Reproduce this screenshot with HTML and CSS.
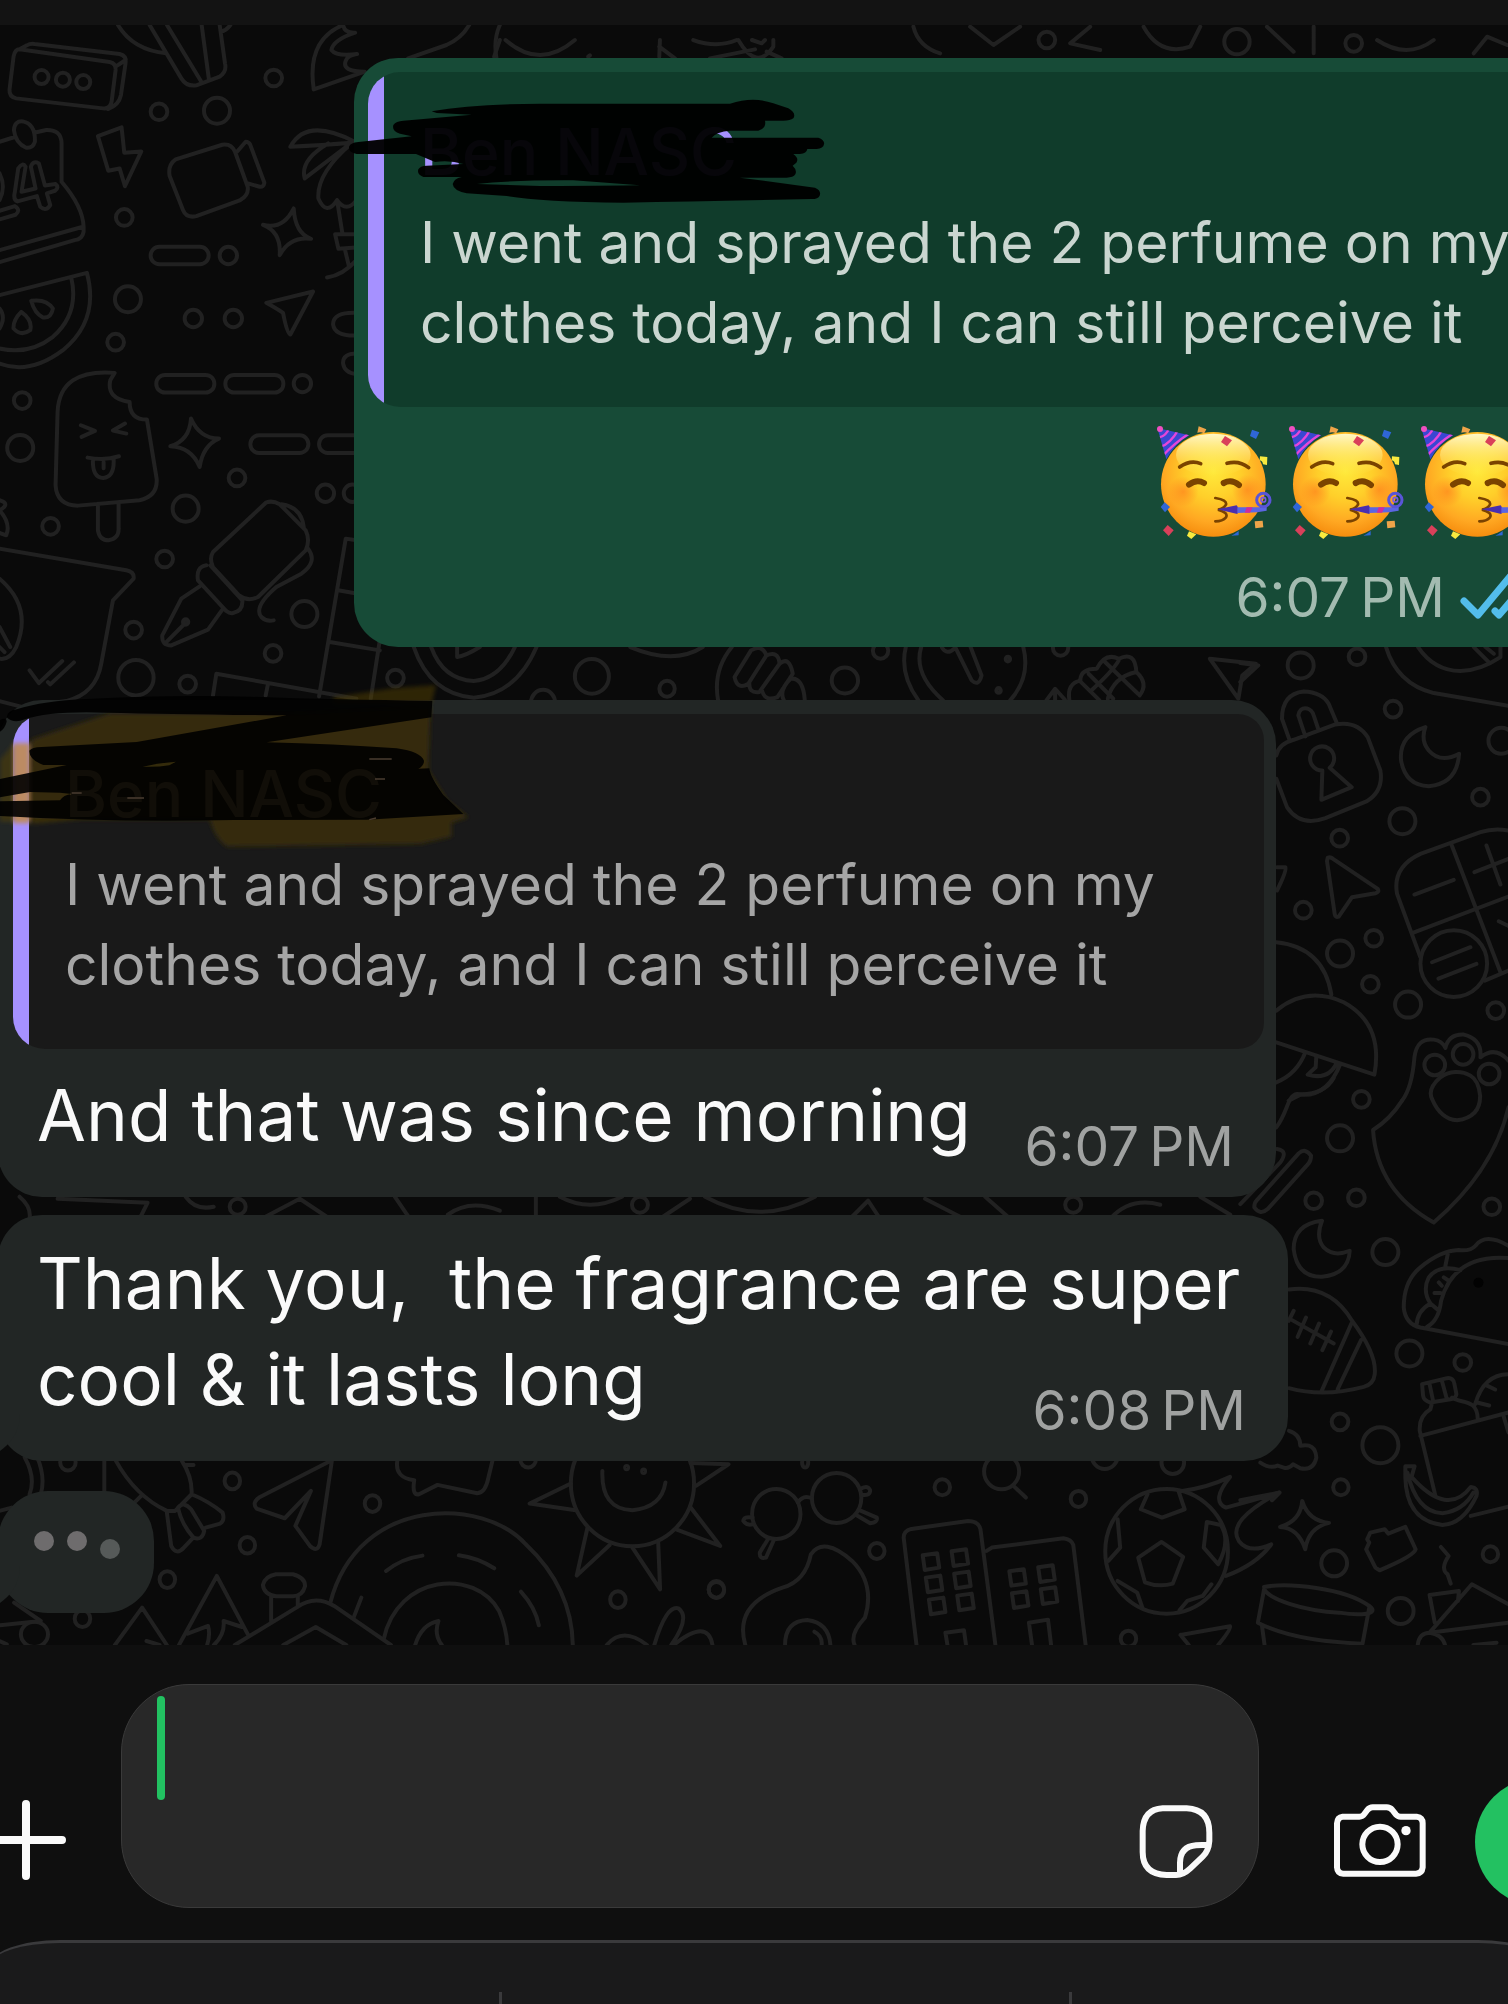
FILE: index.html
```html
<!DOCTYPE html>
<html lang="en">
<head>
<meta charset="utf-8">
<meta name="viewport" content="width=device-width, initial-scale=1">
<title>Chat</title>
<link rel="stylesheet" href="styles.css">
</head>
<body>
<header class="topbar"></header>
<main class="chat">
  <svg class="wallpaper" viewBox="0 25 1508 1619" preserveAspectRatio="xMidYMin slice" aria-hidden="true">
    <!-- top left -->
    <g transform="scale(.33333)">
      <path d="M60 148L330 186Q350 190 348 210L336 305Q332 328 310 325L50 295Q28 290 30 268L42 170Q46 148 60 148ZM60 148L82 136Q92 130 105 132L360 162Q382 168 378 188L364 285Q358 315 325 327M348 200L378 180"/>
      <circle cx="126" cy="231" r="21"/><circle cx="190" cy="239" r="21"/><circle cx="251" cy="246" r="21"/>
      <path d="M355 75Q400 150 500 160M450 75L545 235Q560 260 590 256L660 230Q682 215 676 190L660 75M502 75L605 245M606 75L628 240M664 95Q680 92 692 75"/>
      <circle cx="478" cy="335" r="25"/><circle cx="652" cy="332" r="39"/><circle cx="822" cy="234" r="25"/><circle cx="374" cy="652" r="25"/><circle cx="385" cy="897" r="39"/><circle cx="686" cy="766" r="26"/><circle cx="581" cy="955" r="26"/><circle cx="701" cy="955" r="26"/><circle cx="348" cy="1026" r="25"/><circle cx="68" cy="1201" r="25"/>
      <path d="M1030 75Q920 120 942 268L1095 215Q1025 215 1038 182Q1045 165 1072 162Q1010 170 995 150Q1000 120 1066 98Q1035 100 1030 75M1225 175L1340 135Q1385 115 1408 75M1500 75Q1480 120 1490 175"/>
      <path d="M0 425L48 410M104 398L140 390Q185 388 186 430V545Q250 620 252 680V695Q248 718 225 720L0 786M0 750L250 680M43 390Q45 362 70 364Q108 372 106 425Q100 445 80 443Q48 430 43 390ZM0 520Q20 560 0 600M56 505Q70 485 78 500L66 575L108 565L94 500Q100 480 118 490L136 556L168 552Q180 562 166 572L142 580L152 615Q140 635 122 620L112 588L54 604Q40 600 46 575ZM0 632L46 618Q65 630 48 644L0 658"/>
      <path d="M295 408L366 382L374 458L425 454L376 558L360 505L326 512ZM528 478L668 434Q695 430 706 455L744 560Q748 585 722 600L590 648Q560 655 550 630L510 528Q504 495 528 478ZM712 455L738 425Q748 425 752 435L794 548Q792 562 780 560L745 550"/>
      <path d="M882 625Q886 700 934 716Q870 708 840 765Q845 695 790 674Q850 690 882 625ZM800 908L940 874L872 1003Q862 1000 850 938Q830 925 800 908Z"/>
      <rect x="453" y="740" width="174" height="52" rx="26"/>
      <path d="M872 440Q920 350 1065 425M872 440Q970 435 1055 428L915 535Q900 480 985 430M1055 430Q950 520 956 595Q980 650 1012 600Q1040 640 1070 600M1012 600L1028 700M1068 702H1006L1016 746L1068 742M1036 750L1048 800M1070 780Q1030 825 982 832M1070 938Q1000 935 1000 972Q1004 1008 1070 1006M1070 1060Q1028 1060 1030 1090Q1034 1118 1070 1122"/>
      <path d="M0 885L262 818Q300 960 190 1050Q90 1125 0 1090M215 832Q240 940 160 1010Q90 1065 0 1045M95 902Q140 895 160 925Q155 955 130 952Q105 940 95 902ZM65 935Q100 960 92 990Q65 1010 42 985Q40 960 65 935ZM0 925Q20 950 0 985"/>
    </g>
    <!-- left column below the watermelon -->
    <g transform="translate(0 340) scale(.33333)">
      <circle cx="62" cy="323" r="39"/><circle cx="153" cy="558" r="25"/><circle cx="495" cy="656" r="25"/><circle cx="558" cy="505" r="39"/><circle cx="712" cy="413" r="25"/><circle cx="908" cy="130" r="26"/><circle cx="977" cy="459" r="26"/><circle cx="1058" cy="459" r="26"/><circle cx="402" cy="869" r="25"/><circle cx="914" cy="821" r="39"/><circle cx="820" cy="939" r="25"/><circle cx="409" cy="1012" r="53"/><circle cx="564" cy="1031" r="25"/><circle cx="1187" cy="1013" r="25"/>
      <rect x="470" y="104" width="174" height="53" rx="26"/><rect x="677" y="104" width="174" height="53" rx="26"/><rect x="752" y="285" width="174" height="53" rx="26"/><rect x="958" y="285" width="174" height="53" rx="26"/>
      <path d="M345 98Q180 85 174 215L168 435Q172 495 235 496L420 480Q475 468 471 415L442 238Q390 238 390 185Q320 175 332 120ZM295 490V570Q300 600 327 600Q358 595 357 565V490M244 255L286 272L246 290M376 250L340 271L380 280M264 352Q315 362 358 348M280 358Q278 412 311 413Q345 410 342 356M312 365V384"/>
      <path d="M574 235Q600 295 658 295Q610 315 600 380Q575 320 512 318Q570 300 574 235ZM0 480Q35 490 0 510M0 510Q35 550 20 585L0 578"/>
      <path d="M800 486Q820 480 840 492L918 570Q932 600 918 630L775 770Q745 785 718 765L640 680Q628 655 640 635ZM632 675L728 780Q730 812 700 818Q690 820 680 812L595 720Q588 680 620 675M845 492Q905 500 912 560M925 625Q955 665 905 700L830 740Q760 800 785 830Q800 845 822 840M600 738L545 775L488 885Q485 915 515 915L625 868L668 808M500 905L560 845"/><circle cx="558" cy="845" r="8"/>
      <path d="M0 625L380 690Q405 695 402 715L340 780L305 970Q290 1060 200 1082L70 1100L0 1082M0 715Q100 800 50 920Q30 960 0 955M0 860L32 920M0 920L15 935M90 990L118 1028L188 962M145 1025L152 1032L223 966"/>
      <path d="M1070 600L1038 595L958 1068M1015 750L1062 758M990 905L1140 930M1140 900L1113 1075M640 1065L650 1000L1070 1075M804 1035L798 1065"/>
      <path d="M1242 920Q1290 1060 1422 1072Q1550 1060 1610 920M1294 920Q1330 1018 1422 1022Q1500 1015 1545 920M1372 920V950Q1400 945 1440 920"/>
    </g>
    <!-- strip above the first message -->
    <g transform="translate(340 40) scale(.33333)">
      <path d="M480 0L463 50M497 0Q600 90 705 0M745 50L750 46M960 0L958 50M958 20L1005 55M1060 0Q1130 25 1190 0M1110 55L1245 28M1195 0Q1250 95 1300 20V0M1280 35L1325 55M1236 0L1265 10L1275 0"/>
      <path d="M1720 -40Q1735 20 1800 40M1890 -40L1960 15L2040 -40M2250 -40L2190 10L2280 30M2410 -40Q2460 50 2550 20L2580 -40M2780 -40L2860 35M2920 -40V40M3110 0Q3200 60 3280 0M3400 40L3440 -10L3500 15"/><circle cx="2120" cy="0" r="25"/><circle cx="2690" cy="5" r="38"/><circle cx="3040" cy="10" r="25"/>
    </g>
    <!-- strip between the first two messages -->
    <g transform="translate(400 640) scale(.5485 .33333)">
      <ellipse cx="350" cy="108" rx="31" ry="52"/><ellipse cx="487" cy="145" rx="14" ry="24"/><ellipse cx="811" cy="120" rx="24" ry="39"/><ellipse cx="876" cy="31" rx="14" ry="24"/><ellipse cx="1204" cy="22" rx="14" ry="24"/><ellipse cx="261" cy="187" rx="22" ry="39"/><ellipse cx="1108" cy="56" rx="4" ry="7"/><ellipse cx="1091" cy="150" rx="4" ry="7"/>
      <path d="M420 20Q500 75 552 20M605 20Q570 90 580 180M640 30Q660 10 668 45L635 130Q615 150 610 110ZM668 45Q690 30 692 70L655 155Q635 160 637 125M692 70Q710 45 716 100L688 170Q665 185 660 150M738 180Q735 110 712 115Q690 150 700 180M922 20Q910 100 945 180M950 20Q935 100 990 180M1136 20Q1150 110 1112 180M1012 20L1042 120Q1055 140 1060 105L1040 20M988 22Q997 45 1010 25"/>
      <path d="M1178 180L1194 145L1212 178M1194 150V180M1220 180Q1215 130 1240 120Q1240 85 1270 85Q1285 35 1310 55Q1340 30 1342 95Q1365 130 1348 165M1238 120L1275 180M1255 100L1300 175M1285 65L1345 160M1310 60Q1300 90 1260 150M1342 95Q1300 110 1290 175M1476 55L1560 70L1535 105L1528 175Z"/>
    </g>
    <!-- strip between the last two messages -->
    <path d="M20 1196Q32 1206 30 1218M58 1198L148 1202L140 1218M186 1196Q196 1210 214 1206M262 1218L300 1198L330 1218M395 1196L410 1218M448 1214Q470 1198 500 1210M536 1196V1218M560 1196Q590 1212 622 1196M660 1218L690 1198M705 1196Q760 1226 815 1196M850 1218L868 1200L880 1218M925 1198L960 1216M985 1196L1010 1218M1110 1218Q1130 1196 1160 1204M1200 1196L1230 1214"/>
    <circle cx="238" cy="1206" r="8"/><circle cx="640" cy="1204" r="8"/><circle cx="1073" cy="1204" r="8"/>
    <!-- right column, upper part -->
    <g transform="translate(1240 640) scale(.33333)">
      <circle cx="181" cy="75" r="39"/><circle cx="350" cy="49" r="25"/><circle cx="458" cy="206" r="25"/><circle cx="783" cy="301" r="39"/><circle cx="720" cy="470" r="25"/><circle cx="486" cy="542" r="39"/><circle cx="298" cy="593" r="25"/><circle cx="189" cy="809" r="25"/><circle cx="400" cy="893" r="25"/><circle cx="299" cy="939" r="39"/><circle cx="390" cy="1031" r="25"/><circle cx="503" cy="1092" r="39"/><circle cx="766" cy="1110" r="25"/><circle cx="363" cy="1376" r="25"/>
      <path d="M148 300L125 235Q125 160 190 153Q245 155 265 190L288 245M195 288L174 225Q178 200 200 204Q215 208 220 225L235 270M108 345Q115 310 160 298L285 252Q350 240 382 290L420 390Q430 450 380 482L255 533Q180 560 140 500L108 415M246 390L243 478L334 440L268 382M246 390A36 36 0 1 1 268 382"/>
      <path d="M555 260Q475 285 482 360Q495 435 565 437Q650 430 656 340Q600 370 565 330Q540 300 555 260ZM437 20Q470 130 580 158L804 196M533 20Q580 90 660 92Q720 90 780 50V20M700 20L745 65M735 20L760 40M0 68L54 75L0 125M110 680H135Q140 690 110 750M262 652Q270 648 278 655L412 745Q418 755 405 758L335 770L295 828Q285 832 283 820L260 662Z"/>
      <path d="M804 570Q760 562 720 575L540 640Q455 680 470 760L540 950M633 612L780 995M804 768L515 878M522 762L640 718M738 615L780 732M702 695L804 655M775 842L804 856M733 1020L804 990M575 965L690 920M594 1014L708 970"/><circle cx="640" cy="969" r="100"/>
      <path d="M108 905Q250 920 273 1062M108 1110Q200 1035 310 1085Q430 1150 402 1302L108 1205M108 1325Q170 1300 195 1235M228 1245L226 1280L202 1302Q265 1320 290 1265M300 1270Q260 1370 180 1362L145 1380"/>
      <path d="M485 1380Q515 1340 522 1250Q530 1190 580 1197Q605 1200 615 1222Q625 1180 670 1182Q725 1195 720 1250Q765 1215 804 1260"/><circle cx="583" cy="1273" r="31"/><circle cx="668" cy="1241" r="31"/><circle cx="746" cy="1300" r="31"/>
    </g>
    <!-- right column, lower part -->
    <g transform="translate(1240 1080) scale(.33333)">
      <circle cx="299" cy="173" r="39"/><circle cx="220" cy="360" r="25"/><circle cx="348" cy="351" r="25"/><circle cx="754" cy="378" r="25"/><circle cx="435" cy="514" r="39"/><circle cx="507" cy="818" r="39"/><circle cx="667" cy="845" r="25"/><circle cx="299" cy="1023" r="25"/><circle cx="420" cy="1093" r="54"/>
      <path d="M485 60Q450 115 398 148Q410 330 580 425Q760 270 804 80M600 -10Q560 25 575 55Q600 115 650 119Q720 110 719 45Q715 0 690 -15A73 62 0 0 0 600 -10M280 -8Q250 45 170 40C140 45 145 90 108 140"/>
      <path d="M110 205Q145 210 120 245L0 370M175 218Q195 200 212 225Q212 240 205 248L82 385Q60 405 42 380Q42 365 50 358ZM245 420Q160 430 160 505Q170 590 245 588Q325 580 328 510Q280 530 250 500Q225 470 245 420ZM146 626Q270 610 335 720Q410 820 403 880Q400 910 370 918Q250 950 146 922M333 728L244 930M362 778L292 925M150 715L280 788M160 690L145 720M197 710L172 768M236 728L210 788M272 752L246 808"/>
      <path d="M490 680Q490 600 540 560Q600 510 655 508Q690 512 705 495Q735 455 804 495M490 680Q495 730 540 740L804 790M622 520L615 555M660 568Q595 550 565 590Q545 630 570 668Q530 690 528 735M570 668L590 685M804 532Q640 520 602 660Q595 720 560 738M595 605L604 615M610 590L625 600M582 637H600"/>
      <path d="M545 910L620 892Q640 890 642 910L648 940Q645 955 630 955L570 965Q550 960 548 945ZM568 912L578 960M605 902L618 950M575 965L570 985Q535 1005 538 1050L585 1245M635 950C660 970 710 950 712 1015M540 1065L804 995M704 970Q730 880 804 880M735 912L764 926M710 965L746 974M790 1008L804 1055"/>
      <path d="M146 1050Q180 1060 180 1095Q225 1085 228 1130Q220 1170 180 1162L158 1150Q145 1165 130 1160L112 1154Q90 1165 60 1145M0 1258L118 1235L95 1258"/>
    </g>
    <!-- lower strip, left half -->
    <g transform="translate(0 1440) scale(.4847 .33333)">
      <ellipse cx="141" cy="64" rx="16" ry="25"/><ellipse cx="480" cy="120" rx="16" ry="25"/><ellipse cx="769" cy="188" rx="16" ry="25"/><ellipse cx="511" cy="313" rx="16" ry="25"/><ellipse cx="346" cy="416" rx="16" ry="25"/><ellipse cx="171" cy="533" rx="16" ry="25"/><ellipse cx="1090" cy="55" rx="16" ry="25"/><ellipse cx="1275" cy="476" rx="16" ry="25"/><ellipse cx="1478" cy="445" rx="16" ry="25"/><ellipse cx="72" cy="580" rx="28" ry="38"/>
      <path d="M52 50Q75 110 62 160M78 50Q95 110 85 160M0 210L25 200M216 60V155M240 60Q280 165 345 210H362L396 160Q398 110 376 60M383 72H400M396 160Q430 180 460 215Q465 240 455 248L425 260M345 215L354 315Q365 345 380 320L398 292M368 200Q380 180 395 205L422 270Q418 300 400 290Q375 250 368 200ZM292 165L280 182"/>
      <path d="M685 62L660 310Q655 335 640 315L610 255L642 150L588 232L530 203Q520 185 535 170L680 62M820 62Q815 110 855 118Q850 165 865 160L903 132L985 157Q1002 155 1008 110L1016 62"/>
      <ellipse cx="1305" cy="128" rx="127" ry="188"/><ellipse cx="1293" cy="80" rx="3" ry="5"/><ellipse cx="1328" cy="91" rx="3" ry="5"/>
      <path d="M1243 90Q1240 205 1305 208Q1365 200 1373 125M1178 128L1093 188L1188 208M1212 262L1190 404L1258 312M1305 320L1362 445L1358 302M1395 265L1486 315L1425 200M1436 135L1503 70L1425 66"/>
      <path d="M682 485C740 160 1000 170 1085 310Q1180 440 1182 612M792 595C820 400 980 380 1030 510Q1045 560 1047 612M797 390Q830 352 872 344M947 343Q985 350 1020 382M1075 452Q1105 500 1112 553M746 470L730 530M857 612Q870 550 905 540Q895 580 912 612"/>
      <path d="M485 612L612 500Q650 460 690 495L807 612M585 612L652 558L715 612M560 545V466M615 492V466M570 400H605Q630 410 630 435Q625 465 605 466H570Q545 460 543 432Q548 405 570 400ZM370 612L448 405L512 580M388 578L430 555Q435 580 428 612M442 612Q465 580 462 540L500 558M238 612L294 500L345 612M303 600L330 612M30 485L85 540L0 553M0 600L15 610M1252 612Q1285 555 1335 612M1350 612Q1375 490 1400 502Q1425 530 1385 612M1390 612Q1460 530 1470 612"/>
    </g>
    <!-- lower strip, right half -->
    <g transform="translate(700 1440) scale(.5153 .33333)">
      <ellipse cx="470" cy="139" rx="15" ry="24"/><ellipse cx="734" cy="174" rx="15" ry="24"/><ellipse cx="1243" cy="139" rx="15" ry="24"/><ellipse cx="343" cy="330" rx="15" ry="24"/><ellipse cx="32" cy="447" rx="15" ry="24"/><ellipse cx="1230" cy="367" rx="25" ry="39"/><ellipse cx="1359" cy="510" rx="25" ry="39"/><ellipse cx="1533" cy="340" rx="15" ry="24"/><ellipse cx="831" cy="593" rx="15" ry="24"/><ellipse cx="917" cy="65" rx="22" ry="34"/><ellipse cx="785" cy="45" rx="25" ry="39"/>
      <ellipse cx="148" cy="219" rx="47" ry="75"/><ellipse cx="265" cy="171" rx="48" ry="75"/><ellipse cx="585" cy="92" rx="34" ry="53"/><ellipse cx="204" cy="65" rx="6" ry="15"/>
      <path d="M190 185Q200 160 217 172M102 230Q85 225 84 240Q90 255 103 250M133 292L116 335Q115 355 128 350L144 295M310 145Q325 130 330 148Q330 165 315 162M303 222L330 247Q345 245 343 230L308 207M610 138L632 170"/>
      <path d="M88 612Q65 490 160 440Q205 420 215 340Q240 285 295 360Q340 430 320 530Q290 580 300 612M165 612Q165 540 208 537Q250 545 253 612M222 572Q238 585 236 612"/>
      <path d="M420 612L395 290Q395 270 410 264L520 240Q540 240 544 265L573 612M556 330L566 320L705 292Q720 295 724 312L748 612M480 612L476 575L512 568L516 612M644 612L638 545L675 536L681 612M432 343L460 337L464 380L436 387ZM488 331L516 325L520 368L492 375ZM438 410L466 404L470 447L442 454ZM493 398L521 392L525 435L497 442ZM444 476L472 470L476 513L448 520ZM499 464L527 458L531 501L503 508ZM600 391L628 385L632 428L604 434ZM656 379L684 373L688 416L660 423ZM605 457L633 451L637 494L609 501ZM661 445L689 439L693 482L665 489Z"/>
      <ellipse cx="905" cy="331" rx="119" ry="187"/>
      <path d="M895 303L937 348L917 428Q890 440 863 424L850 350ZM868 160L855 205L896 230L940 205L928 150M983 243L1010 252Q1030 300 1005 370L977 320ZM810 235L815 320L792 360M810 420L848 455L858 500M992 430L975 465L945 480L930 508M935 150Q985 140 1028 108Q990 180 1020 200Q1070 180 1123 155Q1020 240 1045 300Q1065 340 1108 310Q1080 370 1020 405"/>
      <path d="M1168 180Q1180 240 1220 246Q1180 260 1174 325Q1160 260 1125 258Q1165 240 1168 180ZM1300 275L1328 265L1335 278L1368 258L1388 325Q1385 345 1318 388L1310 380L1292 325L1298 305L1294 295ZM1437 318L1452 345Q1435 385 1450 400L1456 428"/>
      <path d="M1094 438C1140 425 1250 440 1298 495C1320 520 1280 525 1240 515C1170 510 1105 475 1094 445L1082 545Q1150 600 1285 608L1298 500M1090 555L1095 612M932 582L1028 556Q1030 565 1005 612M932 582L948 612M1368 76H1386L1380 108Q1450 230 1495 138Q1510 140 1506 165Q1480 250 1440 252Q1370 240 1368 110ZM1372 95Q1390 215 1440 217Q1480 210 1500 155M1495 225L1568 197M1415 575L1497 430L1568 490M1415 575L1568 545M1425 545L1415 462L1472 450L1470 480M1392 612Q1395 575 1415 575Q1440 580 1445 612M1500 612L1545 605"/>
    </g>
    <circle class="speck" cx="1478" cy="1282" r="5"/>
  </svg>

  <article class="bubble bubble-out">
    <blockquote class="quote">
      <p class="quote-name">Ben NASC</p>
      <p class="quote-text">I went and sprayed the 2 perfume on my<br>clothes today, and I can still perceive it</p>
    </blockquote>
    <svg class="scribble scribble-out" viewBox="0 0 1560 540" aria-hidden="true">
      <path class="ink" d="M275 214Q400 192 600 191H1170Q1240 168 1300 190L1345 205Q1370 220 1360 235Q1350 243 1325 242H1275Q1280 265 1255 272H1170Q1130 275 1115 293H1435Q1455 300 1452 313Q1450 326 1430 327H1402Q1400 340 1380 342H1360Q1378 355 1369 368L1358 377Q1372 390 1366 403Q1360 413 1340 413H1200L1425 443Q1445 452 1439 467Q1435 477 1415 477Q1100 483 850 488Q600 486 500 468L380 460Q340 452 338 432Q342 415 365 411H250Q230 402 235 388Q240 378 260 377L370 372Q330 360 285 366L228 342H50Q25 338 27 320Q32 308 55 306L215 289L180 281Q155 275 160 255Q168 243 190 242L395 224L290 219Z"/>
      <path class="gap-out" d="M410 432Q520 420 700 421L900 436Q700 438 600 438Z"/>
    </svg>
    <div class="emoji-row" role="img" aria-label="Three partying faces">
      <svg class="emoji" viewBox="81 54 396 396" aria-hidden="true">
        <defs>
          <radialGradient id="face" cx=".5" cy=".38" r=".64"><stop offset="0" stop-color="#ffe93a"/><stop offset=".4" stop-color="#ffcf2a"/><stop offset=".75" stop-color="#ffa822"/><stop offset="1" stop-color="#f58a0c"/></radialGradient>
          <linearGradient id="shine" x1="0" y1="0" x2="0" y2="1"><stop offset="0" stop-color="#fffbd0" stop-opacity=".95"/><stop offset="1" stop-color="#fff15a" stop-opacity="0"/></linearGradient>
          <radialGradient id="blush"><stop offset="0" stop-color="#ff7a1c" stop-opacity=".6"/><stop offset="1" stop-color="#ff7a1c" stop-opacity="0"/></radialGradient>
          <clipPath id="hatclip"><path d="M112 84L208 106Q165 130 139 178Z"/></clipPath>
          <g id="party">
            <circle cx="280" cy="253" r="157" fill="url(#face)"/>
            <ellipse cx="280" cy="165" rx="112" ry="64" fill="url(#shine)"/>
            <circle cx="190" cy="275" r="46" fill="url(#blush)"/><circle cx="382" cy="270" r="46" fill="url(#blush)"/>
            <g clip-path="url(#hatclip)"><path d="M100 70H220V190H100Z" fill="#3a47d2"/><path d="M118 112Q138 108 148 84M122 140Q150 132 176 88M130 166Q160 132 205 102" fill="none" stroke="#e546d8" stroke-width="7"/></g>
            <circle cx="120" cy="87" r="9" fill="#f04fc0"/>
            <g fill="none" stroke="#7a4300" stroke-linecap="round"><path d="M179 201Q212 178 242 191M321 190Q357 180 386 203" stroke-width="11"/><path d="M207 254Q230 236 252 249M311 249Q335 236 357 255" stroke-width="18"/><path d="M286 294Q322 300 318 314Q312 326 294 329Q326 338 318 352Q308 364 286 364" stroke-width="8"/></g>
            <path d="M292 328L350 316Q360 328 352 342Z" fill="#4a2fae"/><path d="M352 322L422 322Q435 320 440 316V332L412 337L352 339Z" fill="#5b66e2"/><path d="M380 322L398 322L390 338H374Z" fill="#d02c9b"/>
            <circle cx="430" cy="300" r="20" fill="none" stroke="#5a55d8" stroke-width="9"/><circle cx="430" cy="299" r="7" fill="none" stroke="#7a5be0" stroke-width="5"/>
            <path d="M236 79L259 88L252 101Q244 94 232 98Z" fill="#efa449"/><path d="M315 108L336 121L321 139L303 126Z" fill="#d9405a"/><path d="M396 89L418 97L408 117L390 108Z" fill="#2f66d6"/><path d="M420 169L442 171L441 195L429 193Q428 183 419 181Z" fill="#f8ea3f"/><path d="M134 307L150 321L135 337L122 321Z" fill="#2f66d6"/><path d="M143 375L161 391L146 408L129 391Z" fill="#d9405a"/><path d="M207 394L229 403L214 417L201 407Z" fill="#f8ea3f"/><path d="M356 393L356 406L334 407Q345 402 356 393Z" fill="#2f66d6"/><path d="M404 364L428 362L430 382L406 385Z" fill="#efa449"/>
          </g>
        </defs>
        <use href="#party"/>
      </svg>
      <svg class="emoji" viewBox="81 54 396 396" aria-hidden="true"><use href="#party"/></svg>
      <svg class="emoji" viewBox="81 54 396 396" aria-hidden="true"><use href="#party"/></svg>
    </div>
    <footer class="meta">
      <time class="stamp">6:07&#8239;PM</time>
      <svg class="ticks" viewBox="0 0 84 64" aria-hidden="true"><path d="M5 36L19 50L54 8M36 46L40 50L76 8"/></svg>
    </footer>
  </article>

  <article class="bubble bubble-in bubble-reply">
    <blockquote class="quote">
      <p class="quote-name">Ben NASC</p>
      <p class="quote-text">I went and sprayed the 2 perfume on my<br>clothes today, and I can still perceive it</p>
    </blockquote>
    <svg class="scribble scribble-in highlight" viewBox="0 0 1500 660" aria-hidden="true">
      <defs><filter id="soft" x="-5%" y="-5%" width="110%" height="110%"><feGaussianBlur stdDeviation="7"/></filter></defs>
      <g filter="url(#soft)"><path class="glow" d="M1000 112L1180 85L1308 75L1295 130H1000Z"/><path class="marker" d="M95 238L330 160L860 160L1292 140L1285 330L1340 420L1405 472L1355 488V530L1260 552L680 560Q640 530 630 478H90Z"/><path class="glow" d="M0 300L42 250V485H0ZM90 476H250L100 492Z"/><path class="amber" d="M42 250H88V490H42Z"/></g>
    </svg>
    <svg class="scribble scribble-in" viewBox="0 0 1500 660" aria-hidden="true">
      <path class="ink" d="M20 172Q22 152 50 148Q130 122 260 117Q500 104 750 110Q1000 120 1297 122L1294 172L800 247Q1000 252 1190 265Q1262 275 1272 302Q1272 318 1255 326L1288 325Q1290 350 1330 405L1390 462L1100 479L700 480Q350 488 0 468V424L180 421Q190 405 215 402L180 398L90 396L0 412V357L200 315H130Q88 300 88 272Q95 262 125 261L410 246L860 166Q520 163 320 158Q150 152 75 178Q40 192 20 172Z"/>
      <path class="ink" d="M0 180Q20 170 20 185Q15 205 0 215Z"/>
      <path class="marker" d="M428 320Q480 308 528 305L508 316Q470 322 428 320Z"/>
      <path class="sliver" d="M1108 297H1175M382 414H432M215 399H245M1125 357H1155M1108 479L1128 474"/>
    </svg>
    <div class="body">
      <p class="text">And that was since morning</p>
      <time class="stamp">6:07&#8239;PM</time>
    </div>
  </article>

  <article class="bubble bubble-in bubble-last">
    <div class="body">
      <p class="text">Thank you,&nbsp; the fragrance are super<br>cool &amp; it lasts long</p>
      <time class="stamp">6:08&#8239;PM</time>
    </div>
  </article>

  <div class="bubble bubble-in typing" role="status" aria-label="typing">
    <i class="dot"></i><i class="dot"></i><i class="dot dot-low"></i>
  </div>
</main>

<form class="composer">
  <button class="icon-btn attach" type="button" aria-label="Attach">
    <svg viewBox="0 0 82 82"><path d="M4 41H77M41 5V77"/></svg>
  </button>
  <div class="field">
    <textarea class="input" aria-label="Message"></textarea>
    <span class="caret"></span>
    <button class="icon-btn sticker" type="button" aria-label="Stickers">
      <svg viewBox="170 425 240 240"><path d="M250 447H322Q390 450 390 520V545Q388 575 370 592L333 627Q312 647 290 647H262Q190 645 190 578V515Q192 450 250 447ZM302 642V610Q303 562 350 558L386 556"/></svg>
    </button>
  </div>
  <button class="icon-btn camera" type="button" aria-label="Camera">
    <svg viewBox="750 420 300 240"><path d="M788 470H838Q848 470 853 462L862 450Q869 442 878 442H920Q930 442 937 450L948 464Q953 470 962 470H1010Q1028 472 1028 490V622Q1026 640 1008 641H790Q772 640 771 622V490Q772 472 788 470Z"/><circle cx="900" cy="553" r="53"/><circle class="solid" cx="978" cy="512" r="14"/></svg>
  </button>
  <button class="send" type="submit" aria-label="Send"></button>
</form>
<div class="keyboard"><span class="slot"></span><span class="slot"></span><span class="slot"></span></div>
</body>
</html>
```
FILE: styles.css
```css
* { box-sizing: border-box; }

body {
  margin: 0;
  min-height: 100vh;
  display: flex;
  flex-direction: column;
  overflow-x: hidden;
  background: #0f0f0f;
  font-family: Inter, "Liberation Sans", sans-serif;
  color: #fafafa;
}

p, blockquote { margin: 0; }
button { padding: 0; border: 0; background: none; }

.topbar { height: 25px; background: #131313; }

/* conversation */
.chat {
  position: relative;
  display: flex;
  flex-direction: column;
  align-items: flex-start;
  padding: 33px 0 32px;
  overflow: hidden;
  background: #0a0a0a;
}

.wallpaper {
  position: absolute;
  inset: 0;
  width: 100%;
  height: 100%;
  fill: none;
  stroke: #212121;
  stroke-width: 4px;
  stroke-linejoin: round;
  stroke-linecap: round;
}
.wallpaper * { vector-effect: non-scaling-stroke; }
.wallpaper .speck { fill: #020202; stroke: none; }

.bubble { position: relative; border-radius: 44px; }

.bubble-out {
  align-self: stretch;
  margin: 0 -56px 0 354px;
  padding: 14px 14px 18px;
  background: #174b37;
}

.bubble-in { margin-left: -2px; background: #222625; }
.bubble-reply { width: 1278px; margin-top: 53px; padding-top: 14px; }
.bubble-last { width: 1290px; margin-top: 18px; padding-top: 2px; }

.bubble-last::before,
.typing::before {
  content: "";
  position: absolute;
  left: -30px;
  bottom: 3px;
  width: 52px;
  height: 44px;
  border-radius: 0 0 44px 0;
  background: #222625;
}

.quote {
  padding: 40px 0 44px 52px;
  border-radius: 32px 26px 26px 32px;
  font-size: 57px;
  line-height: 80px;
  white-space: nowrap;
}
.bubble-out .quote { background: linear-gradient(90deg, #a691ff 16px, #103c2b 16px); color: #cad6d0; }
.bubble-in .quote { margin: 0 12px 0 15px; background: linear-gradient(90deg, #a691ff 16px, #191919 16px); color: #a5a5a5; }
.quote-name { position: relative; z-index: 1; margin-bottom: 11px; font-size: 64px; font-weight: 500; color: #a691ff; }
.bubble-in .quote-name { color: #b09050; }

.scribble { position: absolute; z-index: 2; overflow: visible; }
.highlight { z-index: 0; }
.scribble-out { left: -14px; top: -18px; width: 520px; height: 180px; }
.scribble-in { left: 2px; top: -40px; width: 500px; height: 220px; }
.ink { fill: #000; fill-opacity: .9; }
.scribble-out .ink { fill-opacity: .96; }
.gap-out { fill: #103c2b; }
.marker { fill: #342b0b; }
.glow { fill: #5a4600; fill-opacity: .45; }
.amber { fill: #c08a48; fill-opacity: .85; }
.sliver { stroke: #4a3c30; stroke-width: 4; }

.emoji-row { display: flex; justify-content: flex-end; margin: 11px 7px 0 0; }
.emoji { width: 132px; height: 132px; }

.meta { display: flex; justify-content: flex-end; gap: 14px; margin: 15px 7px 0 0; }
.stamp { font-size: 55px; line-height: 64px; color: #a0a2a1; white-space: nowrap; }
.bubble-out .stamp { color: #a3bbb0; }
.ticks { width: 84px; height: 64px; fill: none; stroke: #53bdeb; stroke-width: 7; stroke-linecap: round; stroke-linejoin: round; }

.body { display: grid; grid-template-columns: minmax(0, 1fr); padding: 18px 42px 19px 39px; }
.text {
  grid-area: 1 / 1;
  padding-bottom: 15px;
  font-size: 71px;
  line-height: 96px;
  white-space: nowrap;
}
.body .stamp { grid-area: 1 / 1; align-self: end; justify-self: end; }

.typing {
  display: flex;
  gap: 13px;
  width: 156px;
  height: 122px;
  margin-top: 30px;
  padding: 40px 0 0 36px;
  border-radius: 50px;
}
.dot { width: 20px; height: 20px; border-radius: 50%; background: #6e6c6d; }
.dot-low { margin-top: 8px; background: #565a59; }

/* message field */
.composer {
  display: flex;
  align-items: flex-end;
  margin-right: -95px;
  padding: 39px 0 32px;
}
.icon-btn svg { display: block; width: 100%; height: 100%; fill: none; stroke: #fafafa; stroke-width: 18; stroke-linejoin: round; stroke-linecap: round; }
.icon-btn .solid { fill: #fafafa; stroke: none; }

.attach { width: 82px; height: 82px; margin: 0 54px 27px -15px; }
.attach svg { stroke-width: 8; }

.field {
  position: relative;
  flex: 1;
  display: flex;
  align-items: flex-end;
  height: 224px;
  padding: 11px 42px 26px 36px;
  border: 1px solid #3a3a3a;
  border-radius: 68px;
  background: #282828;
}
.input {
  flex: 1;
  align-self: stretch;
  padding: 0;
  border: 0;
  outline: 0;
  resize: none;
  background: none;
  color: inherit;
  font: 71px/96px Inter, "Liberation Sans", sans-serif;
}
.caret { position: absolute; left: 35px; top: 11px; width: 8px; height: 104px; border-radius: 4px; background: #22c161; }
.sticker { width: 80px; height: 80px; }
.camera { width: 100px; height: 80px; margin: 0 45px 28px 71px; }
.send { width: 128px; height: 128px; margin-bottom: 2px; border-radius: 50%; background: #23c161; }

.keyboard {
  flex: 1;
  display: grid;
  grid-template-columns: 51fr 57fr 48fr;
  min-height: 65px;
  margin: 0 -40px 0 -10px;
  padding-top: 49px;
  border-top: 3px solid #3a3a3c;
  border-radius: 70px 70px 0 0 / 26px 26px 0 0;
  background: #1a1a1b;
}
.slot + .slot { border-left: 3px solid #3a3a3c; }
```
